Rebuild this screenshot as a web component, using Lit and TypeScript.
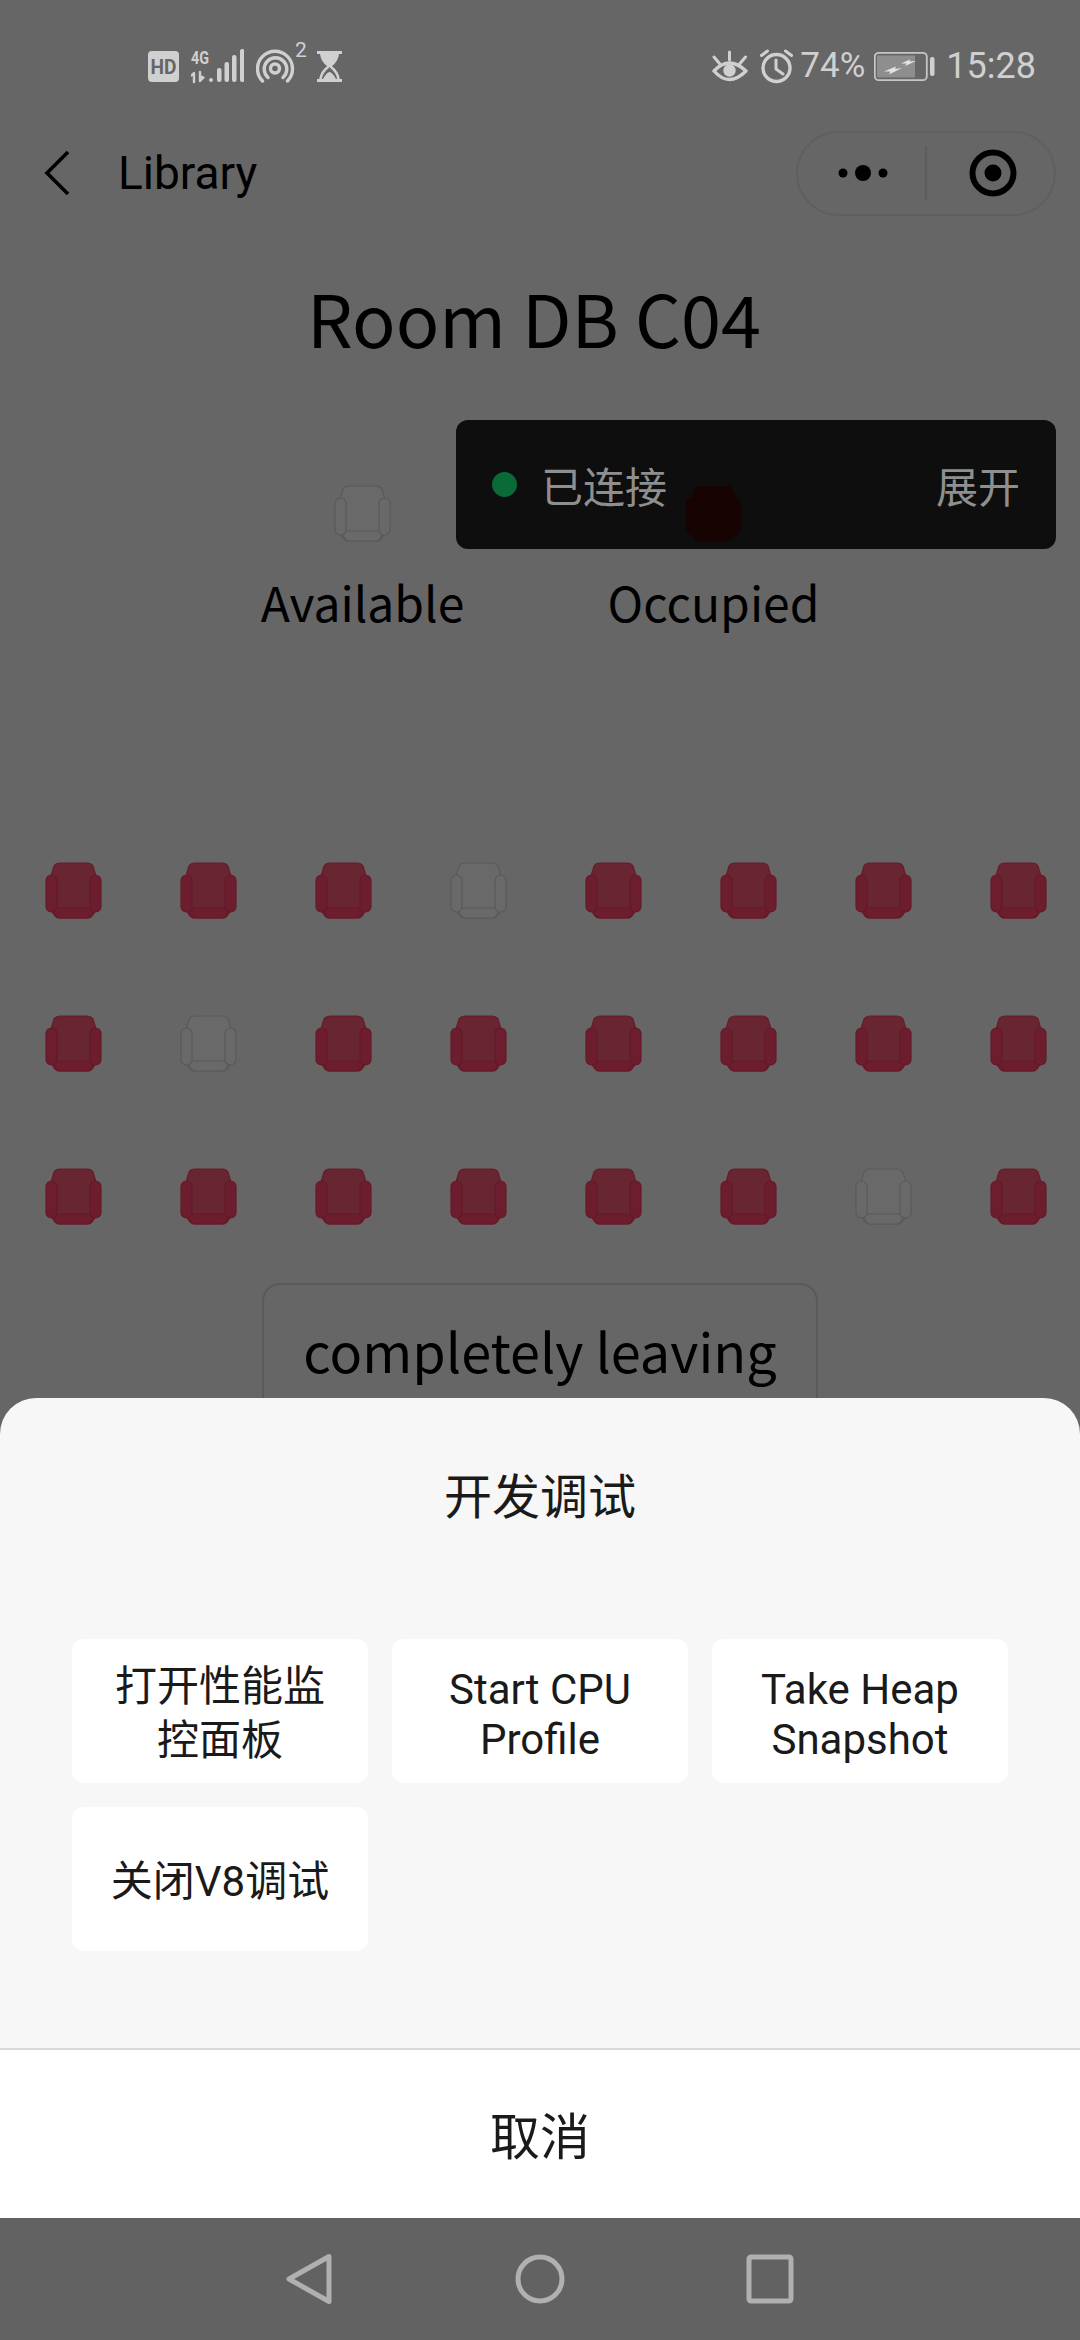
import { LitElement, html, css } from "lit";
import { customElement } from "lit/decorators.js";

type SeatKind = "taken" | "free" | "dim";

const seatRows: number[] = [3, 1, 6];
const seatCols = [0, 1, 2, 3, 4, 5, 6, 7];

function seat(kind: SeatKind) {
  return html`<svg class="seat ${kind}" width="57" height="57" viewBox="0 0 57 57">
    <path class="body" d="M15 1H42Q46 1 48 4L51 14V48L47 54Q45 56 42 56H15Q12 56 10 54L6 48V14L9 4Q11 1 15 1Z" />
    <path class="cushion" d="M12 46H45L48 50L46 54Q44 56 42 56H15Q13 56 11 54L9 50Z" />
    <rect class="arm" x="1" y="13" width="11" height="37" rx="5.5" />
    <rect class="arm" x="45" y="13" width="11" height="37" rx="5.5" />
  </svg>`;
}

@customElement("app-root")
export class AppRoot extends LitElement {
  static styles = css`
    :host {
      display: flex;
      flex-direction: column;
      width: 1080px;
      height: 2340px;
      overflow: hidden;
      background: #666;
      font-family: "Noto Sans CJK SC", "Noto Sans", sans-serif;
      color: #000;
    }

    /* system status bar */
    .status {
      flex: 0 0 90px;
      box-sizing: border-box;
      padding: 42px 44px 0 148px;
      display: flex;
      justify-content: space-between;
      align-items: center;
      color: #d0d0d0;
      font-family: Roboto, "Liberation Sans", sans-serif;
    }
    .status-group {
      display: flex;
      align-items: center;
      height: 48px;
    }
    .status svg {
      display: block;
      flex: none;
    }
    .ml11 { margin-left: 11px; }
    .ml12 { margin-left: 12px; }
    .sup {
      align-self: flex-start;
      width: 11px;
      margin-top: -2px;
      font-size: 21px;
      line-height: 21px;
    }
    .pct {
      font-size: 35px;
      width: 62px;
      margin-left: 6px;
      white-space: nowrap;
      line-height: 48px;
    }
    .time {
      font-size: 36px;
      margin-left: 11px;
      white-space: nowrap;
      line-height: 48px;
    }
    .ink-fill { fill: #d0d0d0; }
    .ink-line {
      fill: none;
      stroke: #d0d0d0;
      stroke-linecap: round;
      stroke-linejoin: round;
    }
    .glyph {
      font-family: Roboto, sans-serif;
      font-weight: 700;
    }

    /* page content */
    .main {
      flex: 1;
      position: relative;
      min-height: 0;
      overflow: hidden;
    }
    .topbar {
      display: flex;
      align-items: center;
      padding: 39px 24px 0 44px;
    }
    .back {
      display: block;
      flex: none;
    }
    .crumb {
      font-family: Roboto, sans-serif;
      font-size: 46px;
      line-height: 88px;
      margin-left: 48px;
    }
    .capsule {
      margin-left: auto;
      width: 260px;
      height: 85px;
      box-sizing: border-box;
      border: 2px solid #5f5f5f;
      border-radius: 43px;
      display: grid;
      grid-template-columns: 130px 130px;
      align-items: center;
      position: relative;
    }
    .capsule svg {
      display: block;
      justify-self: center;
    }
    .capsule-rule {
      position: absolute;
      left: 127px;
      top: 13px;
      width: 2px;
      height: 55px;
      background: #5d5d5d;
    }
    .title {
      margin: 50px 0 0;
      padding-right: 12px;
      text-align: center;
      font-size: 72px;
      font-weight: 400;
      line-height: 100px;
    }
    .legend {
      display: grid;
      grid-template-columns: 351px 351px;
      margin-top: 118px;
      padding-left: 187px;
    }
    .legend-item {
      display: flex;
      flex-direction: column;
      align-items: center;
    }
    .legend-label {
      font-size: 48px;
      line-height: 70px;
      margin-top: 24px;
      white-space: nowrap;
    }
    .seat {
      display: block;
      flex: none;
      stroke-width: 1.2;
    }
    .seat.taken .body { fill: #672631; stroke: #6b1a2a; }
    .seat.taken .arm { fill: #6c1e2e; stroke: #661928; }
    .seat.taken .cushion { fill: #6c1e2e; stroke: #661928; }
    .seat.free .body,
    .seat.free .arm,
    .seat.free .cushion { fill: #696969; stroke: #5a5a5a; }
    .seat.dim {
      position: relative;
      z-index: 3;
      stroke-width: 0;
    }
    .seat.dim .body,
    .seat.dim .arm,
    .seat.dim .cushion { fill: #180303; }
    .seats {
      display: flex;
      flex-direction: column;
      gap: 96px;
      margin-top: 226px;
      padding-left: 45px;
    }
    .seat-row {
      display: flex;
      gap: 78px;
    }
    .leave {
      box-sizing: border-box;
      width: 556px;
      height: 150px;
      margin: 58px 0 0 262px;
      border: 2px solid #5a5a5a;
      border-radius: 18px;
      font-size: 54px;
      line-height: 130px;
      text-align: center;
      white-space: nowrap;
    }

    /* floating connection panel */
    .vconsole {
      position: absolute;
      left: 456px;
      top: 330px;
      width: 600px;
      height: 129px;
      box-sizing: border-box;
      padding: 0 36px 0 36px;
      display: flex;
      align-items: center;
      background: #0e0e0e;
      border-radius: 12px;
      color: #8f8f8f;
      font-size: 42px;
      z-index: 2;
    }
    .dot {
      width: 25px;
      height: 25px;
      border-radius: 50%;
      background: #0a6b38;
      margin-right: 24px;
    }
    .expand {
      margin-left: auto;
    }

    /* bottom sheet */
    .sheet {
      position: absolute;
      left: 0;
      right: 0;
      bottom: 0;
      height: 820px;
      display: flex;
      flex-direction: column;
      background: #f7f7f7;
      border-radius: 36px 36px 0 0;
      overflow: hidden;
      z-index: 4;
    }
    .sheet-title {
      height: 190px;
      line-height: 190px;
      text-align: center;
      font-size: 48px;
      color: #1a1a1a;
      margin-bottom: 51px;
    }
    .actions {
      display: grid;
      grid-template-columns: repeat(3, 296px);
      grid-auto-rows: 144px;
      gap: 24px 24px;
      padding: 0 72px;
    }
    .action {
      display: flex;
      align-items: center;
      justify-content: center;
      text-align: center;
      background: #fff;
      border-radius: 12px;
      font-size: 42px;
      line-height: 50px;
      padding-top: 8px;
      box-sizing: border-box;
      color: #1a1a1a;
      font-family: Roboto, "Noto Sans CJK SC", sans-serif;
    }
    .action.cjk {
      line-height: 54px;
      padding-top: 5px;
    }
    .cancel {
      margin-top: auto;
      height: 170px;
      box-sizing: border-box;
      background: #fff;
      border-top: 2px solid #d9d9d9;
      font-size: 50px;
      line-height: 166px;
      text-align: center;
      color: #1a1a1a;
    }

    /* system navigation bar */
    .navbar {
      flex: 0 0 122px;
      background: #626262;
      display: flex;
      align-items: center;
      justify-content: center;
      gap: 180px;
    }
    .navbar svg {
      display: block;
      fill: none;
      stroke: #b0b0b0;
      stroke-width: 5;
      stroke-linejoin: round;
    }
  `;

  private statusBar() {
    return html`<div class="status">
      <div class="status-group">
        <svg width="31" height="48" viewBox="0 0 31 48">
          <rect class="ink-fill" x="0" y="9" width="31" height="31" rx="4" />
          <text class="glyph" x="15.5" y="32" font-size="21" text-anchor="middle" textLength="26" lengthAdjust="spacingAndGlyphs" fill="#666">HD</text>
        </svg>
        <svg class="ml12" width="53" height="48" viewBox="191 42 53 48">
          <text class="glyph ink-fill" x="191" y="64" font-size="19" textLength="18" lengthAdjust="spacingAndGlyphs">4G</text>
          <path class="ink-line" stroke-width="2.4" d="M194 82V73L191.5 75.5M200 72V81L203.5 77.5L200 76" />
          <rect class="ink-fill" x="209" y="78" width="4" height="4" rx="2" />
          <rect class="ink-fill" x="217" y="68" width="4.5" height="14" rx="2" />
          <rect class="ink-fill" x="224.5" y="62" width="4.5" height="20" rx="2" />
          <rect class="ink-fill" x="232" y="55" width="4.5" height="27" rx="2" />
          <rect class="ink-fill" x="240" y="49" width="4.5" height="33" rx="2" />
        </svg>
        <svg class="ml12" width="39" height="48" viewBox="256 42 39 48">
          <circle class="ink-line" stroke-width="3.4" cx="275" cy="68.5" r="4.5" />
          <path class="ink-line" stroke-width="3.4" d="M268 77.5A11.3 11.3 0 1 1 283 77.5" />
          <path class="ink-line" stroke-width="3.4" d="M262.5 81A17.5 17.5 0 1 1 287.5 81" />
        </svg>
        <span class="sup">2</span>
        <svg class="ml11" width="25" height="48" viewBox="316 42 25 48">
          <rect class="ink-fill" x="316" y="51" width="25" height="3" />
          <rect class="ink-fill" x="316" y="79" width="25" height="3" />
          <path class="ink-fill" d="M319 54H338Q337 62 330 67H327Q320 62 319 54Z" />
          <path class="ink-line" stroke-width="2.6" d="M327 67Q320.5 72 319.5 79M330 67Q336.5 72 337.5 79" />
          <path class="ink-fill" d="M322 79Q325 73 328.5 72Q332 73 335 79Z" />
        </svg>
      </div>
      <div class="status-group">
        <svg width="36" height="48" viewBox="712 42 36 48">
          <path class="ink-line" stroke-width="3.4" d="M714 71Q729 55 746 71Q729 88 714 71Z" />
          <circle class="ink-fill" cx="729.5" cy="70.5" r="6.2" />
          <path class="ink-line" stroke-width="3" d="M729.5 52V60M714 57L719.5 63.5M745.5 57L740 63.5" />
        </svg>
        <svg class="ml12" width="34" height="48" viewBox="760 42 34 48">
          <circle class="ink-line" stroke-width="3.4" cx="776.5" cy="68" r="13.5" />
          <path class="ink-line" stroke-width="3" d="M776 60V69L783 74M761.5 55.5L767.5 51M791.5 55.5L785.5 51" />
        </svg>
        <span class="pct">74%</span>
        <svg class="ml12" width="61" height="48" viewBox="875 42 61 48">
          <rect x="875.8" y="52.8" width="52" height="27.4" rx="4" fill="none" stroke="#c6c6c6" stroke-width="1.8" />
          <rect x="878" y="55.5" width="38" height="22" fill="#8e8e8e" />
          <path fill="#e4e4e4" d="M885 71.5L897 66.5L896 69L903 68L890 74.5L891.5 71.5Z" />
          <path fill="#e4e4e4" d="M902 63.5L911 59.5L910.5 61.5L917 61L906 66L907.5 63.5Z" />
          <rect class="ink-fill" x="931" y="57" width="4.5" height="19" rx="2" />
        </svg>
        <span class="time">15:28</span>
      </div>
    </div>`;
  }

  render() {
    return html`
      ${this.statusBar()}
      <div class="main">
        <div class="topbar">
          <svg class="back" width="26" height="46" viewBox="0 0 26 46">
            <path d="M24 2L3 23L24 44" fill="none" stroke="#000" stroke-width="3.6" />
          </svg>
          <span class="crumb">Library</span>
          <div class="capsule">
            <svg width="60" height="20" viewBox="0 0 60 20">
              <circle cx="10" cy="10" r="4.5" />
              <circle cx="30" cy="10" r="8" />
              <circle cx="50" cy="10" r="4.5" />
            </svg>
            <span class="capsule-rule"></span>
            <svg width="48" height="48" viewBox="0 0 48 48">
              <circle cx="24" cy="24" r="20.5" fill="none" stroke="#000" stroke-width="6" />
              <circle cx="24" cy="24" r="8.5" />
            </svg>
          </div>
        </div>
        <h1 class="title">Room DB C04</h1>
        <div class="legend">
          <div class="legend-item">
            ${seat("free")}
            <span class="legend-label">Available</span>
          </div>
          <div class="legend-item">
            ${seat("dim")}
            <span class="legend-label">Occupied</span>
          </div>
        </div>
        <div class="seats">
          ${seatRows.map(
            (freeAt) => html`<div class="seat-row">
              ${seatCols.map((c) => seat(c === freeAt ? "free" : "taken"))}
            </div>`
          )}
        </div>
        <div class="leave">completely leaving</div>

        <div class="vconsole">
          <span class="dot"></span>
          <span>已连接</span>
          <span class="expand">展开</span>
        </div>

        <div class="sheet">
          <div class="sheet-title">开发调试</div>
          <div class="actions">
            <div class="action cjk">打开性能监<br />控面板</div>
            <div class="action">Start CPU<br />Profile</div>
            <div class="action">Take Heap<br />Snapshot</div>
            <div class="action cjk">关闭V8调试</div>
          </div>
          <div class="cancel">取消</div>
        </div>
      </div>
      <div class="navbar">
        <svg width="50" height="52" viewBox="3 0 50 52">
          <path d="M47 3.5V48.5L7 26Z" />
        </svg>
        <svg width="50" height="52" viewBox="0 0 50 52">
          <circle cx="25" cy="26" r="22" />
        </svg>
        <svg width="50" height="52" viewBox="0 0 50 52">
          <rect x="4" y="4" width="42" height="44" rx="2" />
        </svg>
      </div>
    `;
  }
}
